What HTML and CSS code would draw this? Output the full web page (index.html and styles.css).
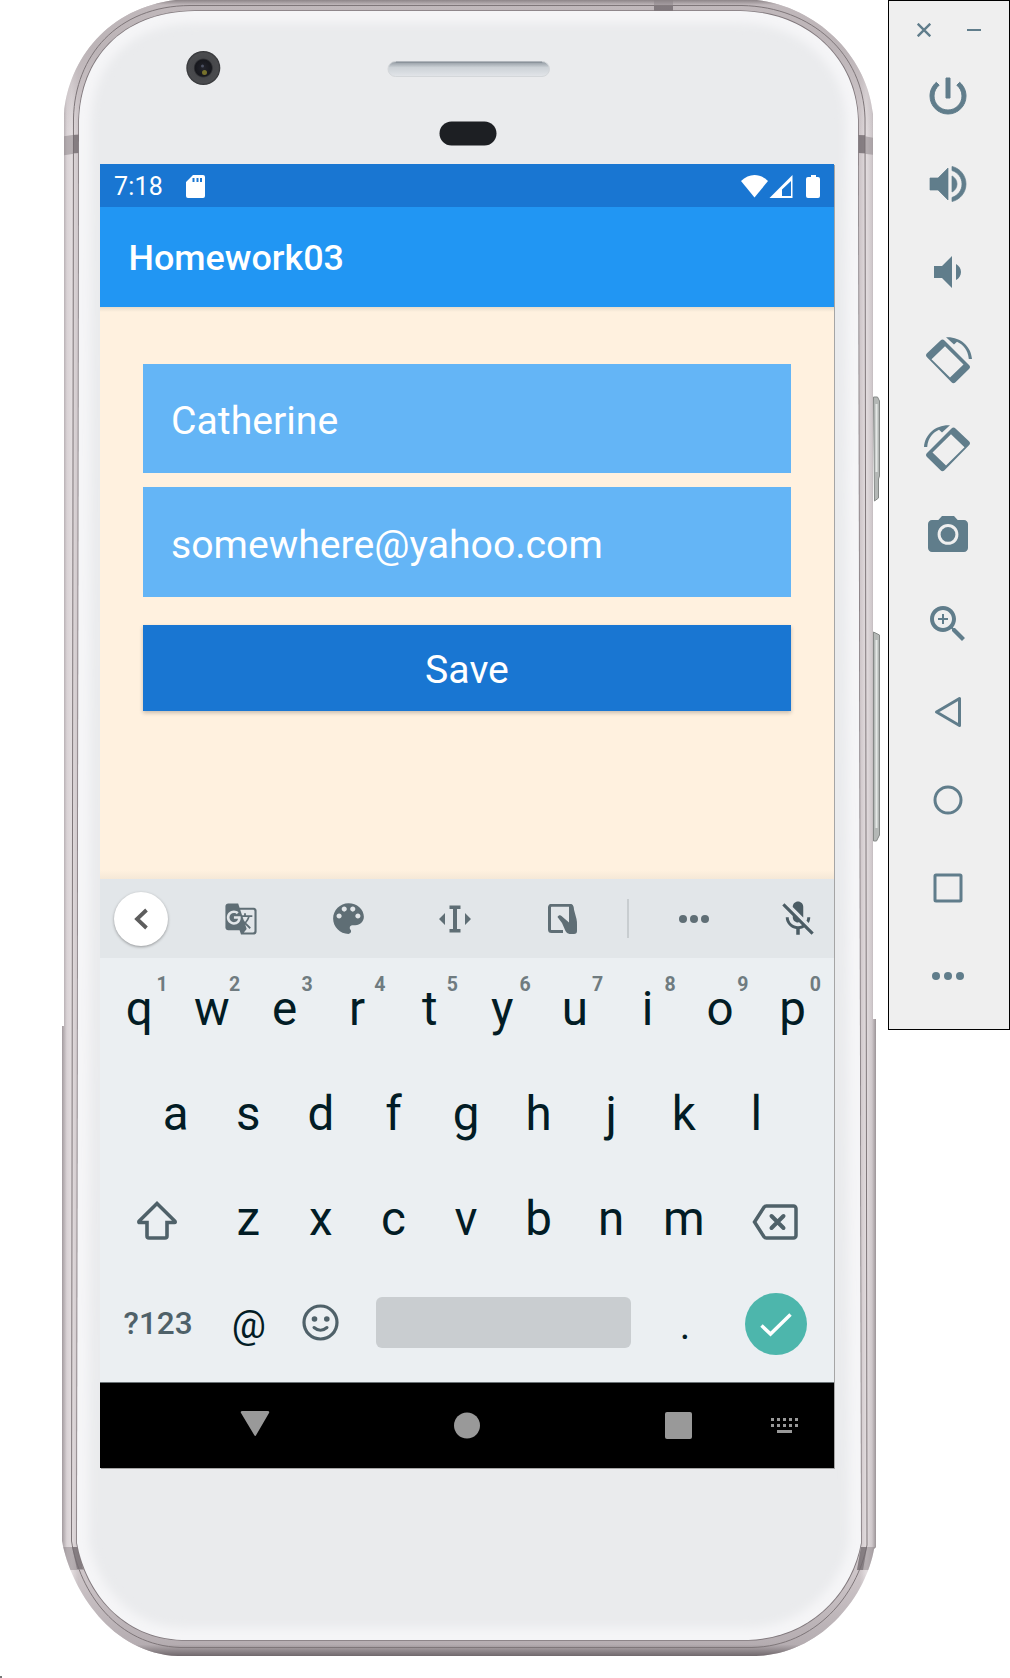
FILE: index.html
```html
<!DOCTYPE html>
<html lang="en">
<head>
<meta charset="utf-8">
<title>Homework03</title>
<link rel="stylesheet" href="styles.css">
</head>
<body>
<main class="desktop">
  <section class="phone">
    <svg class="frame" width="888" height="1678" viewBox="0 0 888 1678">
      <defs>
        <linearGradient id="rimX" x1="62" x2="876" y1="0" y2="0" gradientUnits="userSpaceOnUse">
          <stop offset="0" stop-color="#a39b9f"/><stop offset=".006" stop-color="#d9d2d5"/><stop offset=".012" stop-color="#e2dcde"/><stop offset=".02" stop-color="#cdc5c8"/>
          <stop offset=".98" stop-color="#cdc5c8"/><stop offset=".988" stop-color="#e2dcde"/><stop offset=".995" stop-color="#cfc8cb"/><stop offset="1" stop-color="#9b9497"/>
        </linearGradient>
        <linearGradient id="rimEnds" x1="0" x2="0" y1="0" y2="1656" gradientUnits="userSpaceOnUse">
          <stop offset="0" stop-color="#8d8588"/><stop offset=".003" stop-color="#c0b8bb"/><stop offset=".03" stop-color="#b8b0b3" stop-opacity=".8"/><stop offset=".08" stop-color="#c5bdc0" stop-opacity="0"/>
          <stop offset=".95" stop-color="#b5adb1" stop-opacity="0"/><stop offset=".993" stop-color="#b5adb1"/><stop offset="1" stop-color="#70686c"/>
        </linearGradient>
        <linearGradient id="grille" x1="0" x2="0" y1="0" y2="1"><stop offset="0" stop-color="#8f979f"/><stop offset=".4" stop-color="#cdd2d7"/><stop offset="1" stop-color="#e2e5e9"/></linearGradient>
        <radialGradient id="lens"><stop offset="0" stop-color="#23242c"/><stop offset=".48" stop-color="#17181d"/><stop offset=".58" stop-color="#47484b"/><stop offset=".88" stop-color="#4a4b4e"/><stop offset="1" stop-color="#303134"/></radialGradient>
        <path id="outer" d="M190 -1H742C812 0 867 54 873 114V1019H876V1547L874 1549C866 1596 822 1654 756 1656H178C112 1654 71 1590 62 1541V1026H64V114C69 55 114 1 190 -1Z"/>
        <path id="face" d="M195 11H740C808 12 856 58 858 120L861 1543C852 1592 812 1638 748 1640H182C122 1638 86 1592 77 1543L79 120C81 60 120 12 195 11Z"/>
        <clipPath id="outerClip"><use href="#outer"/></clipPath>
        <clipPath id="faceClip"><use href="#face"/></clipPath>
        <filter id="soft" x="-10%" y="-10%" width="120%" height="120%"><feGaussianBlur stdDeviation="5"/></filter>
      </defs>
      <path fill="#b4b8b6" stroke="#858987" d="M873.500 397h4l2 4v75l-1 3v19l-4 3zM873.500 632l6 3v200l-3 6h-3z"/>
      <path stroke="#e4e7e5" stroke-width="2" d="M876.500 404v68M876.500 640v188"/>
      <use href="#outer" fill="url(#rimX)"/>
      <use href="#outer" fill="url(#rimEnds)"/>
      <path fill="none" stroke="#7e7679" d="M190 5.500H742C812 7 863 54 865 118L867 1545C857 1595 816 1646 752 1647.500H180C117 1645 80 1593 71.500 1541L73.500 118C75 56 117 6 190 5.500Z"/>
      <g clip-path="url(#outerClip)" fill="#8a8286" fill-opacity=".5">
        <path d="M60 137l19-3v19l-19 3zM654 0h19v11h-19zM858 135l17 3v17l-17-2zM62 1547h17l5 23H62zM861 1547h17v23h-21z"/>
        <path fill="#6f676b" fill-opacity=".65" d="M73 135h6v18h-6zM654 6h19v5h-19zM858 135h7v18h-7zM72 1547h6l5 22h-6zM861 1547h6l-4 23h-6z"/>
      </g>
      <use href="#face" fill="#eaebed" stroke="#80787c" stroke-width="1.600"/>
      <g clip-path="url(#faceClip)"><use href="#face" fill="none" stroke="#f5f5f7" stroke-width="24" filter="url(#soft)"/></g>
      <circle cx="203.300" cy="68" r="17" fill="url(#lens)"/>
      <circle cx="204.500" cy="72.500" r="2.500" fill="#77722c"/><circle cx="202.500" cy="66" r="1.500" fill="#4d5263"/>
      <rect x="388" y="61.500" width="161.500" height="15" rx="7.500" fill="url(#grille)" stroke="#d4d7da"/>
      <path stroke="#8b939b" stroke-width="1.500" d="M396 62.200h146"/>
      <rect x="439.500" y="121.500" width="57" height="24" rx="12" fill="#1d1f23"/>
      <path fill="#777" d="M0 1676h2v2H0z"/>
    </svg>

    <div class="screen">
      <header class="status">
        <span class="time">7:18</span>
        <svg class="sd" width="19" height="23" viewBox="0 0 19 23"><path fill="#fff" fill-rule="evenodd" d="M7 0h10a2 2 0 0 1 2 2v19a2 2 0 0 1-2 2H2a2 2 0 0 1-2-2V7zM6.500 3v4h2V3zm4 0v4h2V3zm3.500 0v4h2V3z"/></svg>
        <svg width="79" height="23" viewBox="0 0 79 23" fill="#fff"><path d="M0 6C8-2 19-2 27 6L13.500 22.500z"/><path fill-rule="evenodd" d="M51.500 0v23H28.500zM50 6L41 14.500V21h9z"/><path d="M70 0h5v2h2a2 2 0 0 1 2 2v17a2 2 0 0 1-2 2H67a2 2 0 0 1-2-2V4a2 2 0 0 1 2-2h3z"/></svg>
      </header>
      <h1 class="appbar">Homework03</h1>
      <div class="content">
        <div class="field">Catherine</div>
        <div class="field">somewhere@yahoo.com</div>
        <div class="save">Save</div>
      </div>

      <div class="tools">
        <span class="round"><svg width="16" height="24" viewBox="0 0 16 24"><path d="M13.500 3L4 12l9.500 9" fill="none" stroke="#5d5d5d" stroke-width="3.800"/></svg></span>
        <svg width="34" height="34" viewBox="0 0 24 24"><path d="M21 4H11l-1-3H3c-1.100 0-2 .9-2 2v15c0 1.100.9 2 2 2h8l1 3h9c1.100 0 2-.9 2-2V6c0-1.100-.9-2-2-2zM7 16c-2.760 0-5-2.240-5-5s2.240-5 5-5c1.350 0 2.480.5 3.350 1.300L9.030 8.570c-.38-.36-1.040-.78-2.030-.78-1.740 0-3.150 1.440-3.150 3.210S5.260 14.210 7 14.210c2.010 0 2.840-1.440 2.920-2.410H7v-1.710h4.680c.07.31.12.61.12 1.020C11.800 13.970 9.890 16 7 16zm6.170-5.420h3.700c-.43 1.250-1.110 2.430-2.050 3.470-.31-.35-.6-.72-.86-1.100l-.79-2.370zm8.330 9.920c0 .55-.45 1-1 1H14l2-2.500-1.040-3.100 3.100 3.100.92-.92-3.300-3.250.02-.02c1.130-1.250 1.930-2.690 2.400-4.220H20v-1.300h-4.530V8h-1.290v1.290h-1.440L11.460 5.500h9.040c.55 0 1 .45 1 1v14z"/></svg>
        <svg width="41" height="41" viewBox="0 0 24 24"><path d="M12 3c-4.970 0-9 4.030-9 9s4.030 9 9 9c.83 0 1.500-.67 1.500-1.500 0-.39-.15-.74-.39-1.010-.23-.26-.38-.61-.38-.99 0-.83.67-1.500 1.500-1.500H16c2.760 0 5-2.240 5-5 0-4.420-4.030-8-9-8zm-5.500 9c-.83 0-1.500-.67-1.500-1.500S5.670 9 6.500 9 8 9.670 8 10.500 7.330 12 6.500 12zm3-4C8.670 8 8 7.330 8 6.500S8.670 5 9.500 5s1.500.67 1.500 1.500S10.330 8 9.500 8zm5 0c-.83 0-1.500-.67-1.500-1.500S13.670 5 14.500 5s1.500.67 1.500 1.500S15.330 8 14.500 8zm3 4c-.83 0-1.500-.67-1.500-1.500S16.670 9 17.500 9s1.500.67 1.500 1.500-.67 1.500-1.500 1.500z"/></svg>
        <svg width="32" height="28" viewBox="0 0 32 28"><path d="M0 14l6-6v12zM32 14l-6-6v12zM10.500 .500h11V4H18v20h3.500v3.500h-11V24H14V4h-3.500z"/></svg>
        <svg class="pen" width="29" height="30" viewBox="0 0 29 30"><path d="M24.500 10L24 3a2 2 0 0 0-2-1.700H3.500a2 2 0 0 0-2 2V25.500a2 2 0 0 0 2 2H15" fill="none" stroke="#5f6e75" stroke-width="3"/><path d="M9.500 13c1-2 3-2 4-1l7.500 6.500V2h4l3.500 13c.5 2 .5 4 .5 6v6a3 3 0 0 1-3 3h-4.500a5 5 0 0 1-4-3L14 19z"/></svg>
        <i class="divider"></i>
        <svg width="30" height="8" viewBox="0 0 30 8"><circle cx="4" cy="4" r="4"/><circle cx="15" cy="4" r="4"/><circle cx="26" cy="4" r="4"/></svg>
        <svg class="mic" width="42" height="42" viewBox="0 0 24 24"><path d="M19 11h-1.700c0 .74-.16 1.430-.43 2.050l1.230 1.230c.56-.98.9-2.090.9-3.280zm-4.020.17c0-.06.02-.11.02-.17V5c0-1.660-1.340-3-3-3S9 3.340 9 5v.18l5.980 5.990zM4.270 3L3 4.270l6.010 6.010V11c0 1.660 1.330 3 2.990 3 .22 0 .44-.03.65-.08l1.660 1.660c-.71.33-1.500.52-2.310.52-2.760 0-5.300-2.100-5.300-5.100H5c0 3.410 2.720 6.230 6 6.720V21h2v-3.280c.91-.13 1.770-.45 2.540-.9L19.730 21 21 19.730 4.270 3z"/></svg>
      </div>

      <div class="keys">
        <div class="row">
          <span class="key">q<sup>1</sup></span><span class="key">w<sup>2</sup></span><span class="key">e<sup>3</sup></span><span class="key">r<sup>4</sup></span><span class="key">t<sup>5</sup></span><span class="key">y<sup>6</sup></span><span class="key">u<sup>7</sup></span><span class="key">i<sup>8</sup></span><span class="key">o<sup>9</sup></span><span class="key">p<sup>0</sup></span>
        </div>
        <div class="row">
          <span class="key">a</span><span class="key">s</span><span class="key">d</span><span class="key">f</span><span class="key">g</span><span class="key">h</span><span class="key">j</span><span class="key">k</span><span class="key">l</span>
        </div>
        <div class="row">
          <span class="key wide"><svg width="42" height="42" viewBox="0 0 42 42"><path d="M21 4.500L3 22.300c-.5 1 0 1.200.6 1.200H11V37a2 2 0 0 0 2 2h16a2 2 0 0 0 2-2V23.500h7.500c.6 0 1-.3.500-1.200z" fill="none" stroke="#4f6169" stroke-width="3.600"/></svg></span>
          <span class="key">z</span><span class="key">x</span><span class="key">c</span><span class="key">v</span><span class="key">b</span><span class="key">n</span><span class="key">m</span>
          <span class="key wide"><svg class="erase" width="46" height="38" viewBox="0 0 46 38" fill="none" stroke="#4f6169" stroke-width="3.500"><path d="M14.500 3H41.500a2.500 2.500 0 0 1 2.500 2.500v27a2.500 2.500 0 0 1-2.500 2.500H14.500a3 3 0 0 1-2.500-1.200L2.500 19 12 4.200A3 3 0 0 1 14.500 3z"/><path stroke-width="4" d="M19.500 13l12 12m0-12l-12 12" stroke-linecap="round"/></svg></span>
        </div>
        <div class="row last">
          <span class="key wide symbols">?123</span>
          <span class="key at">@</span>
          <span class="key"><svg width="37" height="37" viewBox="0 0 37 37"><circle cx="18.500" cy="18.500" r="16.500" fill="none" stroke="#4f6169" stroke-width="3.200"/><circle cx="12.500" cy="15" r="2.800" fill="#4f6169"/><circle cx="24.800" cy="15" r="2.800" fill="#4f6169"/><path d="M12 23.500q6.500 5.500 13 0" fill="none" stroke="#4f6169" stroke-width="3" stroke-linecap="round"/></svg></span>
          <span class="space"></span>
          <span class="key dot">.</span>
          <span class="key wide"><span class="done"><svg width="32" height="24" viewBox="0 0 32 24"><path d="M1.500 12.500l9 8.500L30.500 1.500" fill="none" stroke="#fff" stroke-width="3.500"/></svg></span></span>
        </div>
      </div>

      <nav class="navbar">
        <svg width="734" height="85" viewBox="0 1 734 85" fill="#999"><path d="M142.500 29h25q2.500 0 1.500 2L156.200 53q-1 2-2 0L141 31q-1-2 1.500-2z"/><circle cx="367" cy="43.500" r="13"/><rect x="565" y="30" width="27" height="27" rx="2"/><path stroke="#999" stroke-width="3" stroke-dasharray="3" d="M671 37.500h27M671 43.500h27"/><path d="M677 48h15v3h-15z"/></svg>
      </nav>
    </div>
  </section>

  <aside class="panel">
    <div class="window">
      <svg width="14" height="14" viewBox="0 0 14 14"><path d="M.7.700l12.600 12.600M13.300.700L.7 13.300" stroke="#607d8b" stroke-width="2.400"/></svg>
      <svg width="14" height="14" viewBox="0 0 14 14"><path d="M0 6h14v2H0z"/></svg>
    </div>
    <svg viewBox="0 0 24 24"><path d="M13 3h-2v10h2V3zm4.830 2.170l-1.420 1.420C17.990 7.860 19 9.810 19 12c0 3.870-3.130 7-7 7s-7-3.130-7-7c0-2.190 1.010-4.140 2.580-5.420L6.170 5.170C4.230 6.820 3 9.260 3 12c0 4.970 4.030 9 9 9s9-4.030 9-9c0-2.740-1.230-5.180-3.170-6.830z" stroke="#607d8b" stroke-width=".5"/></svg>
    <svg viewBox="0 0 24 24"><path d="M3 9v6h4l5 5V4L7 9H3zm13.500 3c0-1.770-1.020-3.290-2.500-4.030v8.050c1.480-.73 2.500-2.250 2.500-4.020zM14 3.230v2.060c2.890.86 5 3.540 5 6.710s-2.110 5.850-5 6.710v2.060c4.010-.91 7-4.490 7-8.770s-2.990-7.860-7-8.770z" stroke="#607d8b" stroke-width=".35"/></svg>
    <svg viewBox="0 0 24 24"><path d="M18.500 12c0-1.770-1.020-3.290-2.500-4.030v8.050c1.480-.73 2.500-2.250 2.500-4.020zM5 9v6h4l5 5V4L9 9H5z"/></svg>
    <svg viewBox="0 0 48 48"><path id="handset" fill-rule="evenodd" d="M16.500 4.500q2-2 4 0L45 29q2 2 0 4L31.500 46.200q-2 2-4 0L3 21.200q-2-2 0-4zM21 10.200L7.500 23.300l18.500 18.200L39.500 28.500z"/><path d="M22 1.300C36 .500 47 10 48 23h-3.200C44 14 39 8.500 33 5.800L30 8.500z"/></svg>
    <svg class="flip" viewBox="0 0 48 48"><use href="#handset"/><path d="M22 1.300C36 .500 47 10 48 23h-3.200C44 14 39 8.500 33 5.800L30 8.500z"/></svg>
    <svg class="camera" viewBox="0 0 24 24"><circle cx="12" cy="12.200" r="3.700"/><path d="M9 3L7.170 5H4c-1.100 0-2 .9-2 2v12c0 1.100.9 2 2 2h16c1.100 0 2-.9 2-2V7c0-1.100-.9-2-2-2h-3.170L15 3H9zm3 14.400c-2.980 0-5.200-2.300-5.200-5.200S9.020 7 12 7s5.200 2.200 5.200 5.200-2.220 5.200-5.200 5.200z"/></svg>
    <svg viewBox="0 0 24 24"><path d="M15.500 14h-.79l-.28-.27C15.410 12.590 16 11.110 16 9.500 16 5.910 13.090 3 9.500 3S3 5.910 3 9.500 5.910 16 9.500 16c1.610 0 3.090-.59 4.230-1.570l.27.28v.79l5 4.990L20.490 19l-4.990-5zm-6 0C7.010 14 5 11.990 5 9.500S7.010 5 9.500 5 14 7.010 14 9.500 11.990 14 9.500 14zm2.500-4h-2v2H9v-2H7V9h2V7h1v2h2v1z"/></svg>
    <svg viewBox="0 0 48 48"><path class="line" d="M35.500 10.500v27L12.500 24z" stroke-linejoin="round"/></svg>
    <svg viewBox="0 0 48 48"><circle class="line" cx="24" cy="24" r="13"/></svg>
    <svg viewBox="0 0 48 48"><rect class="line" x="11" y="11" width="26" height="26" rx="1"/></svg>
    <svg viewBox="0 0 24 24"><circle cx="6" cy="12" r="2"/><circle cx="12" cy="12" r="2"/><circle cx="18" cy="12" r="2"/></svg>
  </aside>
</main>
</body>
</html>
```
FILE: styles.css
```css
* { box-sizing: border-box; }

body {
  margin: 0;
  background: #fff;
  font-family: Roboto, "Liberation Sans", sans-serif;
}

svg { display: block; }

.desktop {
  display: flex;
  align-items: flex-start;
  width: 1010px;
  height: 1678px;
  overflow: hidden;
}

.phone {
  display: grid;
  grid-template-columns: 888px;
  grid-template-rows: 1678px;
}

.frame,
.screen { grid-area: 1 / 1; }

.screen {
  display: flex;
  flex-direction: column;
  width: 734px;
  height: 1304px;
  margin: 164px 0 0 100px;
  box-shadow: 1px 1px 0 #a5a5a5;
}

.status {
  display: flex;
  align-items: center;
  height: 43px;
  padding: 1px 14px 0;
  background: #1976d2;
  color: #fff;
}

.time { font-size: 25px; line-height: 43px; letter-spacing: .2px; }
.sd { margin: 0 auto 0 23px; }

.appbar {
  height: 100px;
  margin: 0;
  padding-left: 28.5px;
  background: #2196f3;
  color: #fff;
  font-size: 35.9px;
  font-weight: 500;
  line-height: 103px;
}

.content {
  display: flex;
  flex-direction: column;
  height: 572px;
  padding: 57px 43px 0;
  background: linear-gradient(#e6dccb, #fff1df 5px, #fff1df 563px, #f5e8d7);
  color: #fff;
  font-size: 39.2px;
}

.field {
  height: 109px;
  margin-bottom: 14px;
  padding-left: 28px;
  background: #64b5f6;
  line-height: 115px;
}

.field + .field { height: 110px; line-height: 117px; }

.save {
  height: 86px;
  margin-top: 14px;
  background: #1976d2;
  line-height: 91px;
  text-align: center;
  box-shadow: 0 2px 4px rgba(0, 0, 0, .22);
}

.tools {
  display: grid;
  grid-template-columns: 82px 118px 96px 118px 98px 32px 100px 90px;
  place-items: center;
  height: 79px;
  background: #e2e6e9;
  fill: #5f6e75;
}

.round {
  display: grid;
  place-items: center;
  width: 54px;
  height: 54px;
  border-radius: 50%;
  background: #fff;
  box-shadow: 0 1px 3px rgba(0, 0, 0, .35);
}

.divider { width: 2px; height: 39px; background: #c8cdd0; }
.pen { margin-right: 2px; }
.mic { justify-self: end; margin-right: 15px; fill: #4b5c64; }

.keys {
  height: 425px;
  background: #ebeff2;
  color: #021c25;
  font-size: 47.5px;
  border-bottom: 1px solid #6b7376;
}

.row {
  display: flex;
  justify-content: center;
  height: 105px;
  padding-right: 2px;
}

.key {
  display: flex;
  justify-content: center;
  position: relative;
  width: 72.6px;
  line-height: 102px;
}

.key sup {
  position: absolute;
  top: 14px;
  right: 8px;
  color: #6f7b80;
  font-size: 19.5px;
  font-weight: 700;
  line-height: 25px;
}

.wide { width: 109px; }
.wide svg { margin-top: 31px; }
.wide .erase { margin-top: 35px; }

.symbols { color: #4f6169; font-size: 31.5px; font-weight: 500; }
.at { font-size: 38px; line-height: 104px; }
.last { padding-right: 0; }
.last > .key > svg { margin: 31px 2px 0 0; }

.space {
  width: 255px;
  height: 51px;
  margin: 24px 18px 0;
  border-radius: 6px;
  background: #c9cdd0;
}

.dot { font-size: 40px; line-height: 106px; }

.done {
  display: grid;
  place-items: center;
  width: 62px;
  height: 62px;
  margin-top: 20px;
  border-radius: 50%;
  background: #4db6ac;
}

.done svg { margin: 1px 0 0; }

.navbar { height: 85px; background: #000; }

.panel {
  display: flex;
  flex-direction: column;
  align-items: center;
  gap: 40px;
  width: 122px;
  height: 1030px;
  border: 1px solid #000;
  background: #efefef;
  fill: #607d8b;
}

.panel > svg { width: 48px; height: 48px; margin-right: 2px; }
.panel > .camera { margin-top: -2px; margin-bottom: 2px; }

.window {
  display: flex;
  gap: 36px;
  margin: 22px 0 -5px;
}

.flip { transform: scaleX(-1); }
.line { fill: none; stroke: #607d8b; stroke-width: 3; }
```
